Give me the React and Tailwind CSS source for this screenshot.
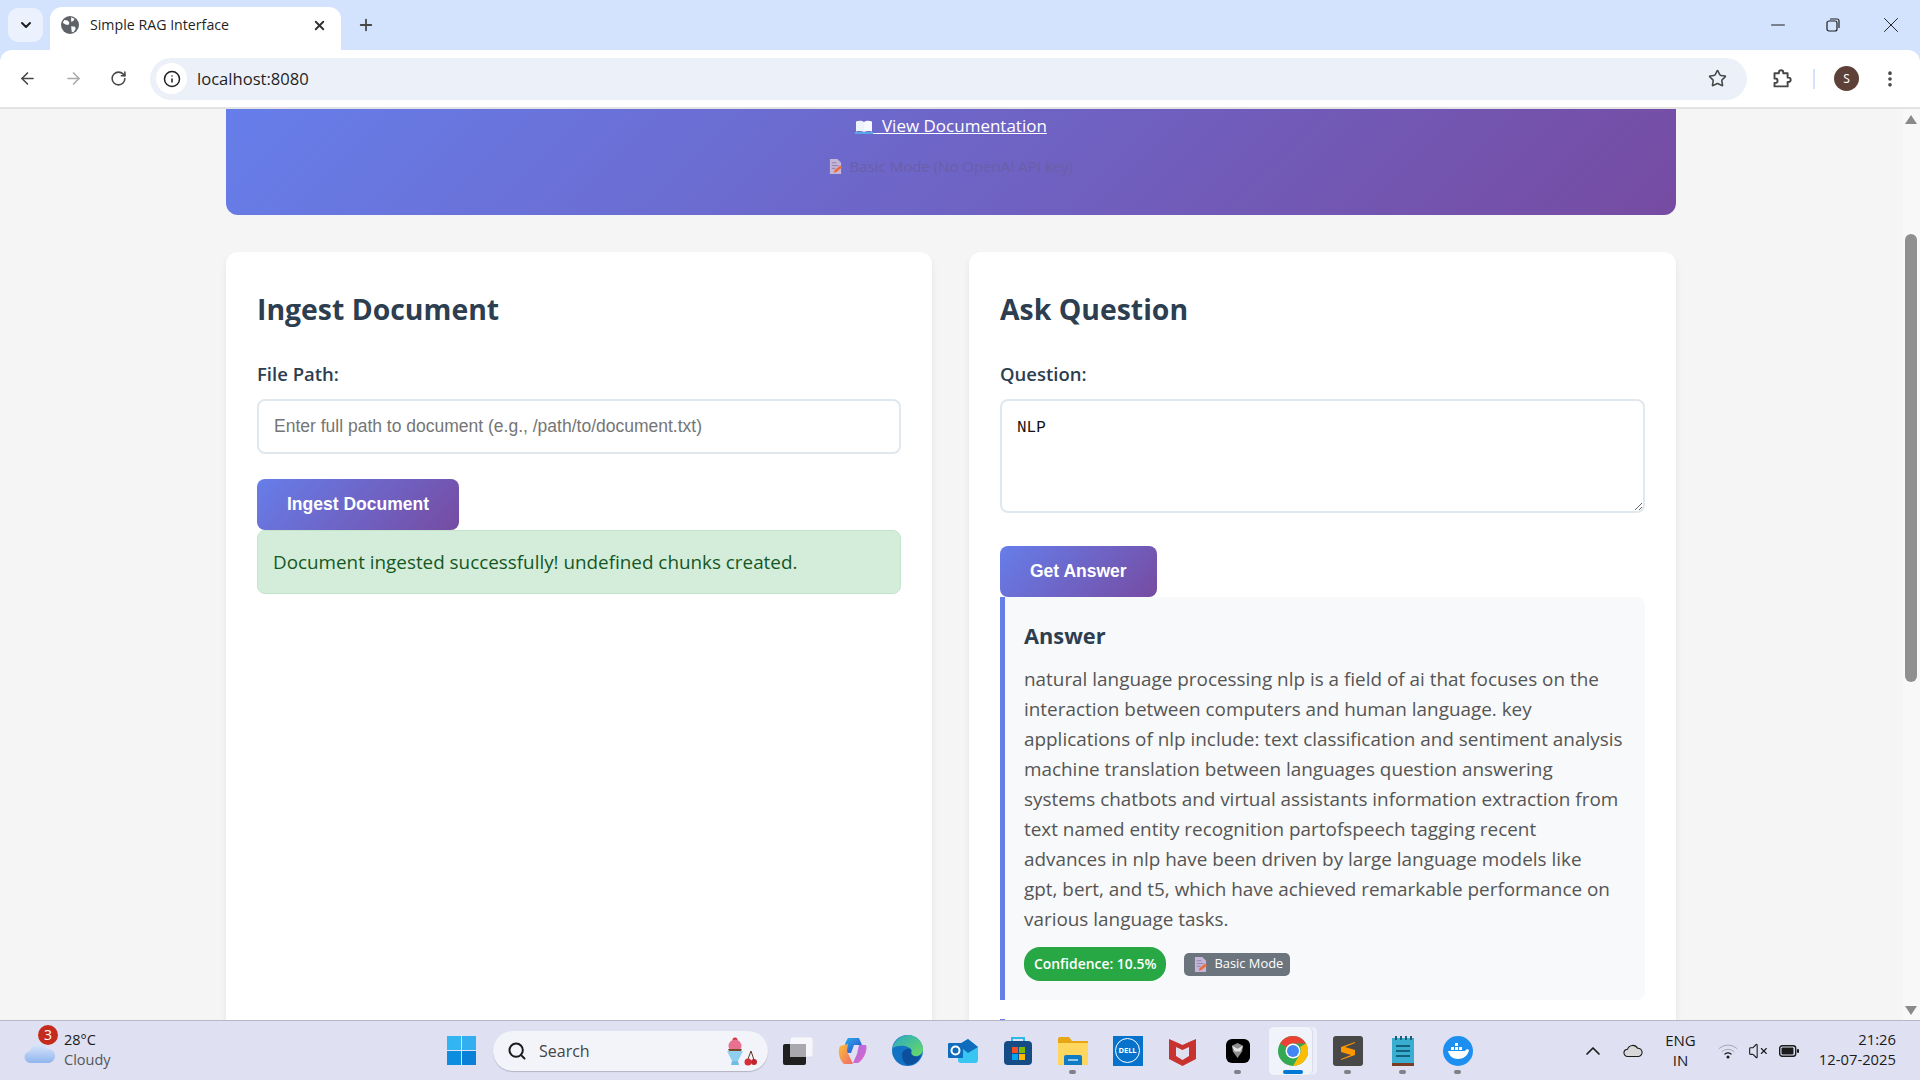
import { ArrowLeft, ArrowRight, RotateCw, Info, Star, EllipsisVertical, ChevronDown, X, Plus, Minus, ChevronUp, Search, VolumeX } from 'lucide-react';

function Globe() {
    return (
        <svg viewBox="0 0 16 16" className="h-[18px] w-[18px]">
            <circle cx="8" cy="8" r="8" fill="#5f6368" />
            <path d="M3 3.5l3 .5 1.5 2-1 2-2.5-.5L1.5 6zM9 1l3 1.5-1 2-2 .5zM9 9l3.500.5.5 2-2 3-1.500-.5z" fill="#fff" />
        </svg>
    );
}

function BookIcon() {
    return (
        <svg viewBox="0 0 18 14" className="inline-block h-[14px] w-[18px] align-[-2px]">
            <path d="M1 1.5c3-1 6-1 8 .5v10c-2-1.200-5-1.200-8-.5z" fill="#eef2fb" />
            <path d="M17 1.5c-3-1-6-1-8 .5v10c2-1.200 5-1.200 8-.5z" fill="#f8f9fe" />
            <path d="M0 12h18v2H0z" fill="#5aa5e6" />
        </svg>
    );
}

function MemoIcon() {
    return (
        <svg viewBox="0 0 14 16" className="inline-block h-[15px] w-[13px] align-[-2px]">
            <path d="M1 0h8l4 4v12H1z" fill="#c4b6d8" />
            <path d="M3 4h5M3 7h7M3 10h4" stroke="#8f7fa8" strokeWidth="1" />
            <path d="M5 15l1-3 6-5 2 2-6 5z" fill="#ee6b3b" />
        </svg>
    );
}

function ChromeTop() {
    return (
        <div className="shrink-0 bg-[#d3e3fd]">
            <div className="flex h-[50px] items-end">
                <div className="mb-[8px] ml-[8px] flex h-[34px] w-[35px] items-center justify-center rounded-[10px] bg-[#ecf2fd]">
                    <ChevronDown size={16} strokeWidth={3} className="text-[#1f1f1f]" />
                </div>
                <div className="ml-[7px] flex h-[43px] w-[291px] items-center rounded-t-[12px] bg-white pr-[14px] pb-[7px] pl-[11px]">
                    <Globe />
                    <span className="ml-[11px] flex-1 text-[14.2px] text-[#1f1f1f] font-['Open_Sans',sans-serif]">Simple RAG Interface</span>
                    <X size={15} strokeWidth={3} className="text-[#303134]" />
                </div>
                <div className="mb-[11px] ml-[16px] flex h-[28px] items-center">
                    <Plus size={18} strokeWidth={2.4} className="text-[#474747]" />
                </div>
                <div className="mb-[11px] ml-auto flex h-[28px] items-center pr-[16px] text-[#1f1f1f]">
                    <Minus size={22} strokeWidth={1.1} />
                    <svg viewBox="0 0 14 14" className="ml-[37px] h-[14px] w-[14px]" fill="none" stroke="#1f1f1f" strokeWidth="1.2">
                        <rect x="1" y="3" width="10" height="10" rx="2" />
                        <path d="M4 1h7a2 2 0 0 1 2 2v7" />
                    </svg>
                    <X size={26} strokeWidth={0.9} className="ml-[38px]" />
                </div>
            </div>
            <div className="flex h-[59px] items-center rounded-t-[12px] border-b-2 border-[#e3e3e3] bg-white">
                <div className="ml-[18px] flex items-center gap-[27px]">
                    <ArrowLeft size={19} strokeWidth={2} className="text-[#474747]" />
                    <ArrowRight size={19} strokeWidth={2} className="text-[#a9a9a9]" />
                    <RotateCw size={17} strokeWidth={2.2} className="text-[#474747]" />
                </div>
                <div className="ml-[23px] flex h-[42px] w-[1597px] items-center rounded-full bg-[#ecf1f9] pr-[20px] pl-[6px]">
                    <div className="flex h-[31px] w-[31px] items-center justify-center rounded-full bg-white">
                        <Info size={18} strokeWidth={2} className="text-[#1f1f1f]" />
                    </div>
                    <span className="ml-[10px] flex-1 pt-[2px] text-[16.6px] text-[#1f1f1f] font-['Open_Sans',sans-serif]">localhost:8080</span>
                    <Star size={19} strokeWidth={2} className="text-[#474747]" />
                </div>
                <svg viewBox="0 0 24 24" className="ml-[24px] h-[21px] w-[21px]" fill="none" stroke="#474747" strokeWidth="2.2" strokeLinejoin="round">
                    <path d="M4 6h5V5a2.5 2.5 0 0 1 5 0v1h5v5h1a2.500 2.500 0 0 1 0 5h-1v5H4v-4h1a2.500 2.500 0 0 0 0-5H4z" />
                </svg>
                <div className="ml-[21px] h-[20px] w-[2px] bg-[#d3e3fd]" />
                <div className="ml-[19px] flex h-[25px] w-[25px] items-center justify-center rounded-full bg-[#5d4037] text-[12px] text-white">S</div>
                <EllipsisVertical size={20} strokeWidth={2.4} className="ml-[21px] text-[#474747]" />
            </div>
        </div>
    );
}

function Card({ children }) {
    return <div className="min-h-[900px] min-w-0 rounded-[12px] bg-white px-[31px] pt-[37px] shadow-[0_4px_7px_rgba(0,0,0,0.07)]">{children}</div>;
}

function SubmitButton({ children }) {
    return (
        <button className="flex h-[51px] items-center rounded-[8px] bg-[linear-gradient(135deg,#667eea,#764ba2)] px-[30px] text-[17.5px] font-bold text-white font-['Liberation_Sans',sans-serif]">
            {children}
        </button>
    );
}

function Page() {
    return (
        <div className="flex min-h-0 flex-1 bg-[#f5f5f5]">
            <div className="min-w-0 flex-1 overflow-hidden pr-[227px] pl-[226px] font-['Open_Sans','Noto_Sans',sans-serif]">
                <div className="flex h-[106px] flex-col items-center rounded-b-[12px] bg-[linear-gradient(135deg,#667eea,#764ba2)]">
                    <a className="mt-[3px] text-[17px] leading-[28px] text-white underline">
                        <BookIcon />&nbsp; View Documentation
                    </a>
                    <div className="mt-[12px] text-[15px] leading-[28px] text-[#6a5fa8]">
                        <MemoIcon />&nbsp; Basic Mode (No OpenAI API key)
                    </div>
                </div>
                <div className="mt-[37px] grid grid-cols-[706px_707px] gap-[37px]">
                    <Card>
                        <h2 className="text-[28.4px] leading-[40px] font-bold text-[#2c3e50]">Ingest Document</h2>
                        <div className="mt-[31px] text-[18.5px] leading-[28px] font-semibold text-[#2c3e50]">File Path:</div>
                        <input
                            className="mt-[11px] h-[55px] w-full rounded-[8px] border-2 border-[#e1e8ed] px-[15px] text-[17.5px] font-['Liberation_Sans',sans-serif] placeholder:text-[#757575]"
                            placeholder="Enter full path to document (e.g., /path/to/document.txt)"
                            readOnly
                        />
                        <div className="mt-[25px]">
                            <SubmitButton>Ingest Document</SubmitButton>
                        </div>
                        <div className="flex h-[64px] items-center rounded-[8px] border border-[#c3e6cb] bg-[#d4edda] px-[15px] text-[18.85px] text-[#155724]">
                            Document ingested successfully! undefined chunks created.
                        </div>
                    </Card>
                    <Card>
                        <h2 className="text-[28.4px] leading-[40px] font-bold text-[#2c3e50]">Ask Question</h2>
                        <div className="mt-[31px] text-[18.5px] leading-[28px] font-semibold text-[#2c3e50]">Question:</div>
                        <textarea
                            className="mt-[11px] block h-[114px] w-full rounded-[8px] border-2 border-[#e1e8ed] px-[15px] py-[15px] text-[16px] text-[#111] font-['Liberation_Mono',monospace]"
                            defaultValue="NLP"
                            readOnly
                        />
                        <div className="mt-[33px]">
                            <SubmitButton>Get Answer</SubmitButton>
                        </div>
                        <div className="rounded-r-[8px] border-l-[5px] border-[#667eea] bg-[#f8f9fa] px-[19px] pt-[24px] pb-[19px]">
                            <h3 className="text-[21.8px] leading-[30px] font-bold text-[#2c3e50]">Answer</h3>
                            <p className="mt-[13px] text-[18.9px] leading-[30px] text-[#555]">
                                natural language processing nlp is a field of ai that focuses on the interaction between computers and human language. key applications of nlp include: text classification and sentiment analysis machine translation between languages question answering systems chatbots and virtual assistants information extraction from text named entity recognition partofspeech tagging recent<br />advances in nlp have been driven by large language models like<br />gpt, bert, and t5, which have achieved remarkable performance on various language tasks.
                            </p>
                            <div className="mt-[13px] flex items-center gap-[18px]">
                                <span className="flex h-[34px] items-center rounded-[16px] bg-[#28a745] px-[10px] text-[13.9px] font-semibold text-white">Confidence: 10.5%</span>
                                <span className="flex h-[23px] items-center gap-[7px] rounded-[5px] bg-[#6c757d] pr-[7px] pl-[10px] text-[12.9px] text-white"><MemoIcon /> Basic Mode</span>
                            </div>
                        </div>
                        <div className="mt-[19px] h-[10px] w-[5px] bg-[#667eea]" />
                    </Card>
                </div>
            </div>
            <div className="flex w-[17px] shrink-0 flex-col items-center bg-[#f8f8f8] pt-[6px] pr-[2px] pb-[5px]">
                <div className="h-0 w-0 border-x-[6px] border-b-[9px] border-x-transparent border-b-[#8a8a8a]" />
                <div className="mt-[110px] mb-auto h-[448px] w-[12px] rounded-full bg-[#8f8f8f]" />
                <div className="h-0 w-0 border-x-[6px] border-t-[9px] border-x-transparent border-t-[#8a8a8a]" />
            </div>
        </div>
    );
}

function AppIcon({ children, dot, active }) {
    return (
        <div className="relative flex h-[52px] w-[55px] items-center justify-center">
            {active && <div className="absolute top-[2px] left-[4px] h-[48px] w-[48px] rounded-[5px] bg-[#eceefa]" />}
            {active && <div className="absolute top-[2px] left-[4px] h-[48px] w-[43px] rounded-[5px] bg-[#f1f3fb] shadow-[1px_0_1px_rgba(0,0,0,0.08)]" />}
            <div className="relative flex">{children}</div>
            {dot && <div className="absolute bottom-[3px] h-[4px] w-[7px] rounded-full bg-[#7f8088]" />}
            {active && <div className="absolute bottom-[3px] h-[4px] w-[20px] rounded-full bg-[#0078d4]" />}
        </div>
    );
}

function Taskbar() {
    return (
        <div className="relative flex h-[60px] shrink-0 items-center border-t border-[#b5b7cb] bg-[#dfe1f2] text-[#1b1b1b] font-['Open_Sans',sans-serif]">
            <div className="relative ml-[24px] flex w-[100px] items-center">
                <svg viewBox="0 0 32 24" className="h-[24px] w-[32px]">
                    <defs>
                        <linearGradient id="cloudFill" x1="0" y1="0" x2="0" y2="1">
                            <stop offset="0" stopColor="#dbe6fb" />
                            <stop offset="1" stopColor="#8fb6ee" />
                        </linearGradient>
                    </defs>
                    <path d="M7 24a6 6 0 0 1-1-12 9 9 0 0 1 17-2 7 7 0 0 1 2 14z" fill="url(#cloudFill)" />
                </svg>
                <div className="absolute top-[-5px] left-[14px] flex h-[20px] w-[20px] items-center justify-center rounded-full bg-[#c42b1c] text-[14px] text-white">3</div>
                <div className="ml-[8px] pb-[2px] text-[14.5px] leading-[20px]">
                    <div>28°C</div>
                    <div className="text-[#555]">Cloudy</div>
                </div>
            </div>
            <div className="ml-[323px] grid h-[29px] w-[29px] grid-cols-2 gap-[1px]">
                <div className="bg-[#33b5f2]" />
                <div className="bg-[#33aef0]" />
                <div className="bg-[#0d8de0]" />
                <div className="bg-[#0a80d8]" />
            </div>
            <div className="ml-[17px] flex h-[40px] w-[275px] items-center rounded-full bg-[#f3f4fa] pl-[14px] shadow-[0_1px_1px_rgba(0,0,0,0.2)]">
                <Search size={20} strokeWidth={2.4} className="text-[#1b1b1b]" />
                <span className="ml-[12px] text-[16px] text-[#444]">Search</span>
                <svg viewBox="0 0 34 32" className="mr-[10px] ml-auto h-[32px] w-[34px]">
                    <circle cx="11" cy="5" r="2.5" fill="#d62f3a" />
                    <circle cx="11" cy="11" r="6.5" fill="#e8718f" />
                    <path d="M4 14h14l-1 2H5z" fill="#7a4a2b" />
                    <path d="M3 16h16l-5 10h-6z" fill="#8fd0ee" />
                    <path d="M8 26h6l1 4H7z" fill="#6fbce4" />
                    <circle cx="24" cy="27" r="3.5" fill="#d62f3a" />
                    <circle cx="30" cy="27" r="3" fill="#c4242f" />
                    <path d="M24 24l3-8 3 9" stroke="#5b3a1e" fill="none" />
                </svg>
            </div>
            <div className="ml-[2px] flex items-center">
                <AppIcon>
                    <svg viewBox="0 0 30 28" className="h-[28px] w-[30px]">
                        <rect x="7" y="0" width="23" height="20" rx="2" fill="#f6f6fb" stroke="#cfd0dc" strokeWidth="0.5" />
                        <rect x="0" y="7" width="23" height="21" rx="2" fill="#1f1f1f" />
                        <rect x="7" y="7" width="16" height="13" fill="#a8a8ae" />
                    </svg>
                </AppIcon>
                <AppIcon>
                    <svg viewBox="0 0 30 27" className="h-[27px] w-[30px]">
                        <defs>
                            <linearGradient id="copilotA" x1="0" y1="0" x2="1" y2="1">
                                <stop offset="0" stopColor="#2bb5e8" />
                                <stop offset="1" stopColor="#2a45d0" />
                            </linearGradient>
                            <linearGradient id="copilotB" x1="0" y1="0" x2="1" y2="1">
                                <stop offset="0" stopColor="#f8c33a" />
                                <stop offset="1" stopColor="#f2676a" />
                            </linearGradient>
                            <linearGradient id="copilotC" x1="0" y1="0" x2="1" y2="1">
                                <stop offset="0" stopColor="#a96be8" />
                                <stop offset="1" stopColor="#e267c2" />
                            </linearGradient>
                        </defs>
                        <path d="M10 1h11l3 7h-8l-3 8H4c2-5 3-11 6-15z" fill="url(#copilotA)" />
                        <path d="M21 8h7c2 4-2 15-8 18h-5l4-9z" fill="url(#copilotC)" />
                        <path d="M2 9l8-2-1 7 6 13H6C2 24-1 15 2 9z" fill="url(#copilotB)" />
                    </svg>
                </AppIcon>
                <AppIcon>
                    <svg viewBox="0 0 31 31" className="h-[31px] w-[31px]">
                        <defs>
                            <linearGradient id="edgeTop" x1="0" y1="0" x2="1" y2="1">
                                <stop offset="0" stopColor="#2aa7c9" />
                                <stop offset="1" stopColor="#6bdc5e" />
                            </linearGradient>
                        </defs>
                        <circle cx="15.5" cy="15.5" r="15.5" fill="#1273c4" />
                        <path d="M0.5 13C3 4 10 0 16 0c9 0 15 7 15 14 0 5-5 8-9 7-3-1-3-3-2-5-2-5-12-7-19.5-3z" fill="url(#edgeTop)" />
                        <path d="M10 20c0-4 4-7 9-6-1 3 0 6 3 7 2 1 5 1 7-1-2 6-7 10-13 10-4-1-6-6-6-10z" fill="#0c4f9c" />
                    </svg>
                </AppIcon>
                <AppIcon>
                    <svg viewBox="0 0 30 25" className="h-[25px] w-[30px]">
                        <path d="M10 7l10-6 10 8v13a3 3 0 0 1-3 3H13a3 3 0 0 1-3-3z" fill="#38c5f2" />
                        <path d="M10 7l10-6 10 8-10 6z" fill="#0f6cbd" />
                        <rect x="0" y="5" width="15" height="15" rx="1" fill="#0f6cbd" />
                        <circle cx="7.5" cy="12.500" r="4" fill="none" stroke="#fff" strokeWidth="2" />
                    </svg>
                </AppIcon>
                <AppIcon>
                    <svg viewBox="0 0 28 29" className="h-[29px] w-[28px]">
                        <path d="M8 6V2h12v4" fill="none" stroke="#2bbbe8" strokeWidth="2" />
                        <rect x="0" y="5" width="28" height="24" rx="4" fill="#154c86" />
                        <rect x="8" y="11" width="6" height="6" fill="#f25022" />
                        <rect x="15" y="11" width="6" height="6" fill="#7fba00" />
                        <rect x="8" y="18" width="6" height="6" fill="#00a4ef" />
                        <rect x="15" y="18" width="6" height="6" fill="#ffb900" />
                    </svg>
                </AppIcon>
                <AppIcon dot>
                    <svg viewBox="0 0 30 28" className="h-[28px] w-[30px]">
                        <path d="M0 2a2 2 0 0 1 2-2h9l3 4h16v24H0z" fill="#e8a615" />
                        <path d="M0 6h30v22H0z" fill="#ffd75e" />
                        <path d="M6 20a2 2 0 0 1 2-2h14a2 2 0 0 1 2 2v8H6z" fill="#0f7bc4" />
                        <path d="M10 23h10" stroke="#bfe3f8" strokeWidth="1.5" />
                    </svg>
                </AppIcon>
                <AppIcon>
                    <div className="flex h-[30px] w-[30px] items-center justify-center bg-[#0672cb]">
                        <div className="flex h-[25px] w-[25px] items-center justify-center rounded-full border border-white text-[7.5px] font-bold text-white">DELL</div>
                    </div>
                </AppIcon>
                <AppIcon>
                    <svg viewBox="0 0 27 30" className="h-[30px] w-[27px]">
                        <path d="M0 3l7 3 6.500 3L20 6l7-3v20l-13.500 7L0 23z" fill="#c8332f" />
                        <path d="M7 11l6.500 3 6.500-3v9l-6.500 4L7 20z" fill="#dfe1f1" />
                    </svg>
                </AppIcon>
                <AppIcon dot>
                    <div className="flex h-[24px] w-[24px] items-center justify-center rounded-[6px] bg-black">
                        <svg viewBox="0 0 14 16" className="h-[15px] w-[13px]">
                            <path d="M7 0l6 3-1 6-5 7-5-7-1-6z" fill="#8e8e8e" />
                            <path d="M1 3l6 3 6-3-3 6H4z" fill="#e4e4e4" />
                        </svg>
                    </div>
                </AppIcon>
                <AppIcon active>
                    <svg viewBox="0 0 30 30" className="h-[30px] w-[30px]">
                        <circle cx="15" cy="15" r="15" fill="#34a853" />
                        <path d="M15 0a15 15 0 0 1 13 7.500H15A7.500 7.500 0 0 0 8.500 11L2 7.500A15 15 0 0 1 15 0z" fill="#ea4335" />
                        <path d="M28 7.500A15 15 0 0 1 15 30l6.500-11.300A7.500 7.500 0 0 0 22 11z" fill="#fbbc05" />
                        <circle cx="15" cy="15" r="7.5" fill="#fff" />
                        <circle cx="15" cy="15" r="6" fill="#4285f4" />
                    </svg>
                </AppIcon>
                <AppIcon dot>
                    <svg viewBox="0 0 30 30" className="h-[30px] w-[30px]">
                        <rect width="30" height="30" rx="3" fill="#484848" />
                        <path d="M22 6L8 11v5l10 3-10 4v1l14-5v-5L12 11l10-4z" fill="#ff9800" />
                    </svg>
                </AppIcon>
                <AppIcon dot>
                    <svg viewBox="0 0 22 30" className="h-[30px] w-[22px]">
                        <rect x="0" y="2" width="22" height="25" fill="#39aed1" />
                        <path d="M4 10h14M4 15h14M4 20h14" stroke="#11617f" strokeWidth="2" />
                        <path d="M0 27h22v3H0z" fill="#7a3f22" />
                        <path d="M4 0v4M9 0v4M14 0v4M19 0v4" stroke="#1d5f78" strokeWidth="2" />
                    </svg>
                </AppIcon>
                <AppIcon dot>
                    <svg viewBox="0 0 30 30" className="h-[30px] w-[30px]">
                        <circle cx="15" cy="15" r="15" fill="#1d8ff0" />
                        <path d="M5 15h17c1-2 3-2 4-1-1 6-6 9-11 9s-9-3-10-8z" fill="#fff" />
                        <path d="M8 11h3v3H8zM12 11h3v3h-3zM16 11h3v3h-3zM12 7h3v3h-3z" fill="#fff" />
                    </svg>
                </AppIcon>
            </div>
            <div className="absolute right-[24px] flex items-center">
                <ChevronUp size={24} strokeWidth={1.7} className="mr-[18px]" />
                <svg viewBox="0 0 22 14" className="mr-[22px] h-[14px] w-[20px]">
                    <path d="M5 13a4 4 0 0 1 0-8 6 6 0 0 1 11-1 4.500 4.500 0 0 1 1 9z" fill="#d8d8d8" stroke="#1b1b1b" strokeWidth="1.2" />
                </svg>
                <div className="mr-[22px] pb-[1px] text-center text-[15px] leading-[20px]">
                    <div>ENG</div>
                    <div>IN</div>
                </div>
                <svg viewBox="0 0 20 16" className="mr-[10px] h-[16px] w-[20px]" fill="none" strokeLinecap="round">
                    <path d="M1 5.500a13 13 0 0 1 18 0" stroke="#a8a9b5" strokeWidth="1" />
                    <path d="M4 8.500a9 9 0 0 1 12 0" stroke="#a8a9b5" strokeWidth="1" />
                    <path d="M7 11a5 5 0 0 1 6 0" stroke="#1b1b1b" strokeWidth="1.3" />
                    <circle cx="10" cy="14" r="1.5" fill="#1b1b1b" />
                </svg>
                <VolumeX size={20} strokeWidth={1.3} className="mr-[11px]" />
                <svg viewBox="0 0 20 12" className="mr-[20px] h-[12px] w-[20px]">
                    <rect x="0.7" y="0.7" width="16" height="10.6" rx="2.5" fill="none" stroke="#1b1b1b" strokeWidth="1.4" />
                    <rect x="2.5" y="2.5" width="12" height="7" rx="1" fill="#1b1b1b" />
                    <rect x="18" y="4" width="2" height="4" rx="1" fill="#1b1b1b" />
                </svg>
                <div className="pb-[3px] text-right text-[14.8px] leading-[20px]">
                    <div>21:26</div>
                    <div>12-07-2025</div>
                </div>
            </div>
        </div>
    );
}

export default function App() {
    return (
        <div className="flex h-screen flex-col overflow-hidden">
            <ChromeTop />
            <Page />
            <Taskbar />
        </div>
    );
}
